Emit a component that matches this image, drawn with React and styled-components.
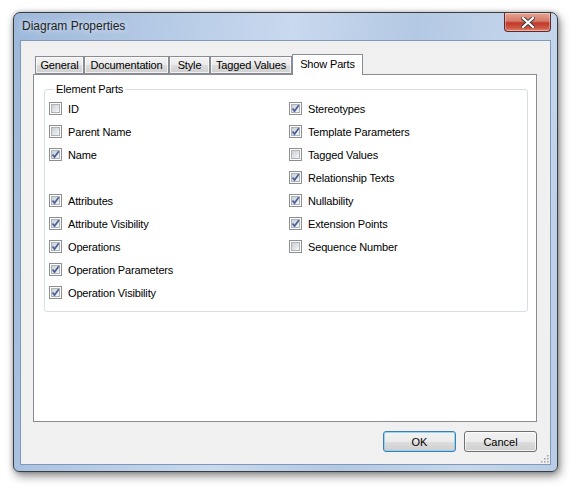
import React from "react";
import styled, { createGlobalStyle } from "styled-components";

const GlobalStyle = createGlobalStyle`
  html, body {
    margin: 0;
    padding: 0;
    background: #ffffff;
  }
  body {
    font-family: "Liberation Sans", Arial, sans-serif;
  }
`;

const Page = styled.div`
  width: 576px;
  height: 491px;
  padding: 12px 0 0 13px;
  box-sizing: border-box;
  overflow: hidden;
`;

const Window = styled.div`
  width: 545px;
  height: 460px;
  box-sizing: border-box;
  border: 1px solid #3a3d42;
  border-radius: 7px 7px 6px 6px;
  background: linear-gradient(
    100deg,
    #9db8da 0%,
    #b6cbe6 25%,
    #c9d9ee 45%,
    #b3c8e3 65%,
    #c6d7ec 85%,
    #b9cce5 100%
  );
  box-shadow: 2px 4px 10px rgba(0, 0, 0, 0.45), 0 0 4px rgba(0, 0, 0, 0.25);
  display: flex;
  flex-direction: column;
  padding: 0 6px 6px 6px;
`;

const TitleBar = styled.div`
  height: 27px;
  display: flex;
  align-items: flex-start;
  justify-content: space-between;
`;

const Title = styled.span`
  font-family: "Liberation Sans", Arial, sans-serif;
  font-size: 12px;
  color: #1e1e1e;
  margin: 6px 0 0 2px;
  text-shadow: 0 0 6px rgba(255, 255, 255, 0.9);
`;

const CloseButton = styled.div`
  width: 47px;
  height: 19px;
  box-sizing: border-box;
  border: 1px solid #5c2a2a;
  border-top: none;
  border-radius: 0 0 4px 4px;
  background: linear-gradient(
    180deg,
    #e8a493 0%,
    #d67a68 45%,
    #c0392b 55%,
    #cf5a45 85%,
    #e4917e 100%
  );
  box-shadow: inset 0 0 0 1px rgba(255, 255, 255, 0.35);
  display: flex;
  align-items: center;
  justify-content: center;
`;

const Client = styled.div`
  flex: 1;
  background: #f0f0f0;
  border: 1px solid #8099b8;
  display: flex;
  flex-direction: column;
  padding: 13px 13px 0 12px;
  position: relative;
`;

const TabStrip = styled.div`
  display: flex;
  align-items: flex-end;
  height: 20px;
  padding-left: 2px;
  position: relative;
  z-index: 1;
`;

const Tab = styled.div`
  box-sizing: border-box;
  width: ${(p) => p.$w}px;
  height: ${(p) => (p.$active ? 21 : 18)}px;
  margin-bottom: ${(p) => (p.$active ? -1 : 0)}px;
  border: 1px solid #898c95;
  border-bottom: ${(p) => (p.$active ? "none" : "1px solid #898c95")};
  background: ${(p) =>
    p.$active
      ? "#ffffff"
      : "linear-gradient(180deg, #f2f2f2 0%, #ebebeb 50%, #dddddd 51%, #cfcfcf 100%)"};
  font-size: 11px;
  letter-spacing: -0.15px;
  color: #000;
  display: flex;
  align-items: ${(p) => (p.$active ? "flex-start" : "center")};
  justify-content: center;
  padding-top: ${(p) => (p.$active ? 3 : 0)}px;
  box-shadow: ${(p) => (p.$active ? "none" : "inset 0 0 0 1px rgba(255,255,255,0.7)")};
`;

const Panel = styled.div`
  height: 348px;
  box-sizing: border-box;
  background: #ffffff;
  border: 1px solid #898c95;
  padding: 8px 8px 0 10px;
`;

const GroupBox = styled.fieldset`
  margin: 0;
  height: 229px;
  box-sizing: border-box;
  border: 1px solid #d5dfe5;
  border-radius: 3px;
  padding: 2px 0 0 4px;
  display: grid;
  grid-template-columns: 240px 1fr;
  align-content: start;
`;

const Legend = styled.legend`
  font-size: 11px;
  letter-spacing: -0.15px;
  color: #000;
  padding: 0 2px;
  margin-left: 5px;
  line-height: 12px;
`;

const Column = styled.div`
  display: grid;
  grid-auto-rows: 23px;
`;

const Row = styled.label`
  display: flex;
  align-items: center;
  gap: 6px;
  font-size: 11px;
  letter-spacing: -0.15px;
  color: #000;
`;

const Box = styled.span`
  width: 13px;
  height: 13px;
  box-sizing: border-box;
  border: 1px solid #8e8f8f;
  background: #ffffff;
  padding: 1px;
  display: inline-flex;
  flex-shrink: 0;
`;

const BoxInner = styled.span`
  flex: 1;
  border: 1px solid #aeb3b9;
  background: linear-gradient(135deg, #cbcfd5 0%, #dfe2e6 50%, #f6f6f6 100%);
  position: relative;
`;

const CheckMark = styled.svg`
  position: absolute;
  left: -2px;
  top: -2px;
`;

const Footer = styled.div`
  display: flex;
  justify-content: flex-end;
  gap: 8px;
  padding-top: 9px;
`;

const Button = styled.div`
  width: 73px;
  height: 21px;
  box-sizing: border-box;
  border: 1px solid ${(p) => (p.$default ? "#3c7fb1" : "#707070")};
  border-radius: 3px;
  background: linear-gradient(180deg, #f2f2f2 0%, #ebebeb 50%, #dddddd 51%, #cfcfcf 100%);
  box-shadow: inset 0 0 0 1px
    ${(p) => (p.$default ? "rgba(140, 210, 240, 0.9)" : "rgba(255,255,255,0.7)")};
  font-size: 11px;
  color: #000;
  display: flex;
  align-items: center;
  justify-content: center;
`;

const Grip = styled.svg`
  position: absolute;
  right: 1px;
  bottom: 1px;
`;

function Checkbox({ checked, label }) {
  return (
    <Row>
      <Box>
        <BoxInner>
          {checked && (
            <CheckMark width="11" height="11" viewBox="0 0 11 11">
              <path
                d="M2.5 5.5 L4.5 8 L8.8 2.2"
                fill="none"
                stroke="#4a5f97"
                strokeWidth="1.7"
              />
            </CheckMark>
          )}
        </BoxInner>
      </Box>
      {label}
    </Row>
  );
}

const leftParts = [
  { label: "ID", checked: false },
  { label: "Parent Name", checked: false },
  { label: "Name", checked: true },
  null,
  { label: "Attributes", checked: true },
  { label: "Attribute Visibility", checked: true },
  { label: "Operations", checked: true },
  { label: "Operation Parameters", checked: true },
  { label: "Operation Visibility", checked: true },
];

const rightParts = [
  { label: "Stereotypes", checked: true },
  { label: "Template Parameters", checked: true },
  { label: "Tagged Values", checked: false },
  { label: "Relationship Texts", checked: true },
  { label: "Nullability", checked: true },
  { label: "Extension Points", checked: true },
  { label: "Sequence Number", checked: false },
];

const tabs = [
  { label: "General", w: 49 },
  { label: "Documentation", w: 85 },
  { label: "Style", w: 41 },
  { label: "Tagged Values", w: 82 },
  { label: "Show Parts", w: 71, active: true },
];

export default function App() {
  return (
    <Page>
      <GlobalStyle />
      <Window>
        <TitleBar>
          <Title>Diagram Properties</Title>
          <CloseButton>
            <svg width="14" height="11" viewBox="0 0 14 11">
              <path
                d="M2 1 L12 10 M12 1 L2 10"
                stroke="#3b3b3b"
                strokeWidth="4"
                strokeLinecap="square"
              />
              <path
                d="M2 1 L12 10 M12 1 L2 10"
                stroke="#ffffff"
                strokeWidth="2.2"
                strokeLinecap="square"
              />
            </svg>
          </CloseButton>
        </TitleBar>
        <Client>
          <TabStrip>
            {tabs.map((t) => (
              <Tab key={t.label} $w={t.w} $active={t.active}>
                {t.label}
              </Tab>
            ))}
          </TabStrip>
          <Panel>
            <GroupBox>
              <Legend>Element Parts</Legend>
              <Column>
                {leftParts.map((p, i) =>
                  p ? <Checkbox key={p.label} {...p} /> : <div key={"gap" + i} />
                )}
              </Column>
              <Column>
                {rightParts.map((p) => (
                  <Checkbox key={p.label} {...p} />
                ))}
              </Column>
            </GroupBox>
          </Panel>
          <Footer>
            <Button $default>OK</Button>
            <Button>Cancel</Button>
          </Footer>
          <Grip width="10" height="10" viewBox="0 0 10 10">
            {[
              [8, 2],
              [8, 5],
              [5, 5],
              [8, 8],
              [5, 8],
              [2, 8],
            ].map(([x, y]) => (
              <rect key={x + "-" + y} x={x} y={y} width="1.5" height="1.5" fill="#a0a0a0" />
            ))}
          </Grip>
        </Client>
      </Window>
    </Page>
  );
}
